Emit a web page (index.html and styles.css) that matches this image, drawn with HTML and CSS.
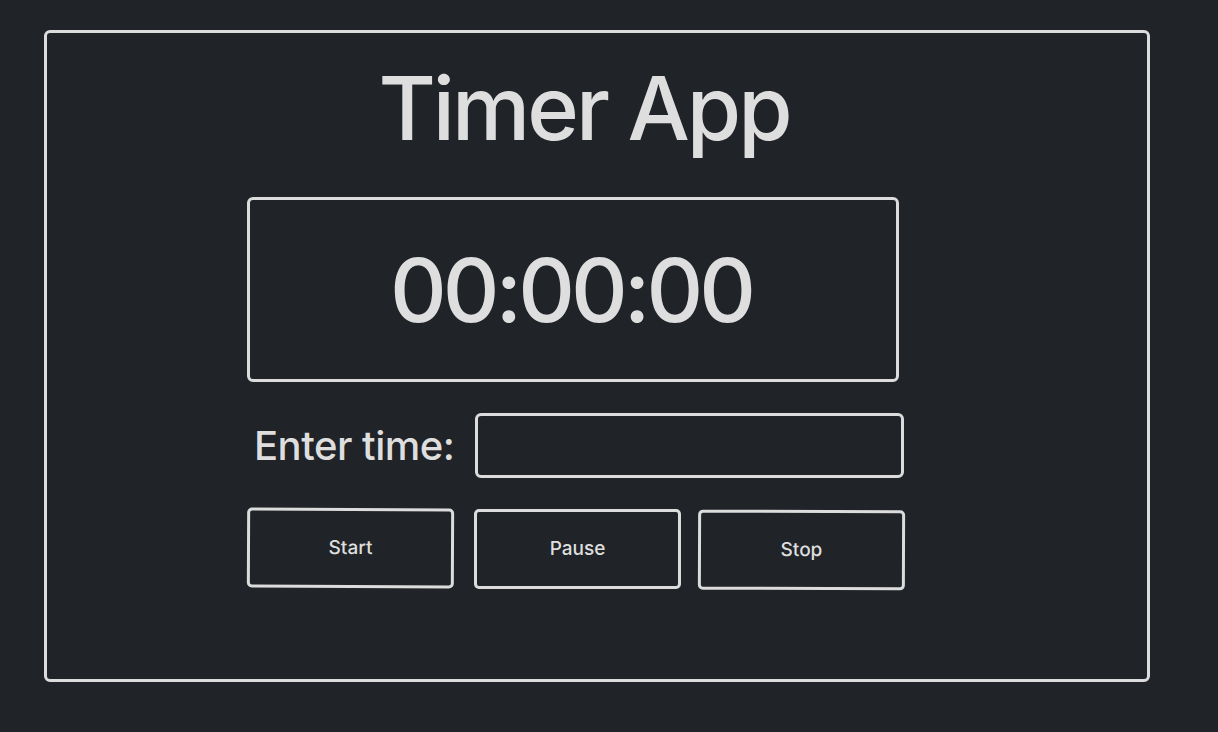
FILE: index.html
```html
<!DOCTYPE html>
<html lang="en">
  <head>
    <meta charset="UTF-8" />
    <meta name="viewport" content="width=device-width, initial-scale=1.0" />
    <title>Timer App</title>
    <link rel="stylesheet" href="styles.css">
  </head>
  <body>
    <div class="app">
      <div class="content">
        <h1 class="title">Timer App</h1>
        <div class="display" id="display">00:00:00</div>
        <div class="entry">
          <label class="entry-label" for="time">Enter time:</label>
          <input class="entry-input" id="time" type="text" />
        </div>
        <div class="controls">
          <button class="btn btn-start">Start</button>
          <button class="btn btn-pause">Pause</button>
          <button class="btn btn-stop">Stop</button>
        </div>
      </div>
    </div>
  </body>
</html>
```
FILE: styles.css
```css
body {
  margin: 0;
  background-color: #202328;
  color: #dedede;
  font-family: Inter, "Noto Sans", sans-serif;
}
.app {
  box-sizing: border-box;
  width: 1106px;
  height: 652px;
  margin: 30px 0 0 44px;
  border: 3px solid #dcdcdc;
  border-radius: 6px;
  padding: 0 0 0 200px;
}
.content {
  width: 660px;
  display: flex;
  flex-direction: column;
}
.title {
  margin: 31px 0 0 0;
  padding-left: 14px;
  text-align: center;
  font-size: 88px;
  font-weight: 500;
  line-height: 88px;
  letter-spacing: -3px;
}
.display {
  box-sizing: border-box;
  width: 652px;
  height: 185px;
  margin-top: 45px;
  border: 3px solid #dcdcdc;
  border-radius: 6px;
  display: flex;
  justify-content: center;
  align-items: center;
  padding-right: 4px;
  font-size: 88px;
  font-weight: 500;
  letter-spacing: -4px;
}
.entry {
  display: flex;
  align-items: center;
  margin-top: 31px;
}
.entry-label {
  padding-left: 7px;
  width: 221px;
  font-size: 40px;
  font-weight: 500;
  letter-spacing: -0.5px;
}
.entry-input {
  box-sizing: border-box;
  width: 429px;
  height: 65px;
  background: transparent;
  border: 3px solid #dcdcdc;
  border-radius: 6px;
  color: #dedede;
  font: inherit;
  font-size: 24px;
  outline: none;
}
.controls {
  display: flex;
  gap: 21px;
  margin-top: 30px;
}
.btn {
  box-sizing: border-box;
  width: 207px;
  height: 80px;
  background: transparent;
  border: 3px solid #dcdcdc;
  border-radius: 5px;
  color: #dedede;
  font-family: Inter, "Noto Sans", sans-serif;
  font-size: 19px;
  font-weight: 500;
  padding-bottom: 2px;
}
.btn-start {
  transform: rotate(0.25deg);
}
.btn-pause {
  margin-top: 1px;
  margin-left: -1px;
}
.btn-stop {
  margin-top: 2px;
  margin-left: -4px;
  transform: rotate(0.2deg);
}
```
